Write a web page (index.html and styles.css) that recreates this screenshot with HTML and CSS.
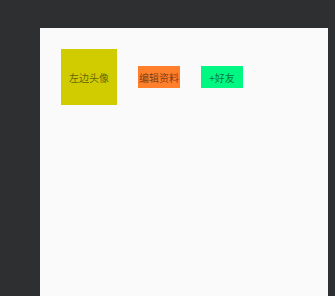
FILE: index.html
```html
<!DOCTYPE html>
<html>
<head>
<meta charset="utf-8">
<title>个人信息</title>
<link rel="stylesheet" href="styles.css">
</head>
<body>
<div class="panel">
	<div class="row">
		<div class="avatar">左边头像</div>
		<div class="btn btn-edit">编辑资料</div>
		<div class="btn btn-add">+好友</div>
	</div>
</div>
</body>
</html>
```

FILE: styles.css
```css
html,body{margin:0;padding:0;height:100%;}
body{background:#2e2f31;font-family:"Noto Sans CJK SC","Noto Sans",sans-serif;overflow:hidden;}
.panel{margin:28px 0 0 40px;width:288px;height:268px;background:#fafafa;padding:21px;box-sizing:border-box;}
.row{display:flex;align-items:center;gap:21px;}
.avatar{width:56px;height:56px;background:#d0cc00;display:flex;align-items:center;justify-content:center;font-size:10px;color:rgba(0,0,0,0.55);}
.btn{width:42px;height:22px;display:flex;align-items:center;justify-content:center;font-size:10px;color:rgba(0,0,0,0.55);}
.btn-edit{background:#ff7f2a;}
.btn-add{background:#00f882;}
```
